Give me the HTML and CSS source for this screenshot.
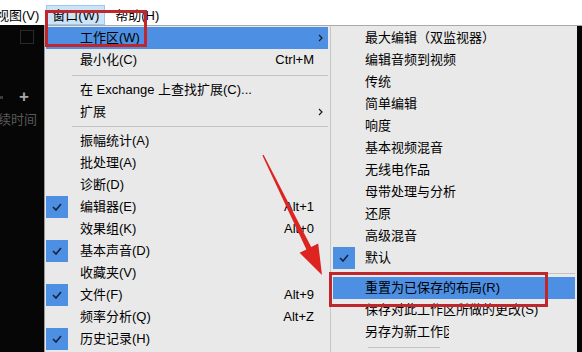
FILE: index.html
```html
<!DOCTYPE html>
<html lang="zh-CN">
<head>
<meta charset="utf-8">
<title>窗口菜单</title>
<link rel="stylesheet" href="styles.css">
</head>
<body>
<div class="screen">
  <div class="menubar">
    <span class="mb-item mb-first">视图(V)</span>
    <span class="mb-item mb-active">窗口(W)</span>
    <span class="mb-item mb-help">帮助(H)</span>
  </div>
  <div class="main">
    <div class="dark">
      <div class="sq"></div>
      <div class="plus-row"><span class="dot"></span><span class="plus">+</span></div>
      <div class="dur">持续时间</div>
    </div>

    <div class="menu">
      <div class="row hl"><span class="chk"></span><span class="lbl">工作区(W)</span><span class="sc"></span><span class="arr"><svg width="5" height="8" viewBox="0 0 5 8"><polyline points="1,1 4,4 1,7" fill="none" stroke="#1a1a1a" stroke-width="1.2"/></svg></span></div>
      <div class="row"><span class="chk"></span><span class="lbl">最小化(C)</span><span class="sc">Ctrl+M</span><span class="arr"></span></div>
      <div class="sep"></div>
      <div class="row"><span class="chk"></span><span class="lbl">在 Exchange 上查找扩展(C)...</span><span class="sc"></span><span class="arr"></span></div>
      <div class="row"><span class="chk"></span><span class="lbl">扩展</span><span class="sc"></span><span class="arr"><svg width="5" height="8" viewBox="0 0 5 8"><polyline points="1,1 4,4 1,7" fill="none" stroke="#1a1a1a" stroke-width="1.2"/></svg></span></div>
      <div class="sep sep-tight"></div>
      <div class="row"><span class="chk"></span><span class="lbl">振幅统计(A)</span><span class="sc"></span><span class="arr"></span></div>
      <div class="row"><span class="chk"></span><span class="lbl">批处理(A)</span><span class="sc"></span><span class="arr"></span></div>
      <div class="row"><span class="chk"></span><span class="lbl">诊断(D)</span><span class="sc"></span><span class="arr"></span></div>
      <div class="row"><span class="chk on"><svg width="10" height="8" viewBox="0 0 10 8"><polyline points="1,4 4,7 9,1" fill="none" stroke="#14233a" stroke-width="1.6"/></svg></span><span class="lbl">编辑器(E)</span><span class="sc">Alt+1</span><span class="arr"></span></div>
      <div class="row"><span class="chk"></span><span class="lbl">效果组(K)</span><span class="sc">Alt+0</span><span class="arr"></span></div>
      <div class="row"><span class="chk on"><svg width="10" height="8" viewBox="0 0 10 8"><polyline points="1,4 4,7 9,1" fill="none" stroke="#14233a" stroke-width="1.6"/></svg></span><span class="lbl">基本声音(D)</span><span class="sc"></span><span class="arr"></span></div>
      <div class="row"><span class="chk"></span><span class="lbl">收藏夹(V)</span><span class="sc"></span><span class="arr"></span></div>
      <div class="row"><span class="chk on"><svg width="10" height="8" viewBox="0 0 10 8"><polyline points="1,4 4,7 9,1" fill="none" stroke="#14233a" stroke-width="1.6"/></svg></span><span class="lbl">文件(F)</span><span class="sc">Alt+9</span><span class="arr"></span></div>
      <div class="row"><span class="chk"></span><span class="lbl">频率分析(Q)</span><span class="sc">Alt+Z</span><span class="arr"></span></div>
      <div class="row"><span class="chk on"><svg width="10" height="8" viewBox="0 0 10 8"><polyline points="1,4 4,7 9,1" fill="none" stroke="#14233a" stroke-width="1.6"/></svg></span><span class="lbl">历史记录(H)</span><span class="sc"></span><span class="arr"></span></div>
    </div>

    <div class="submenu">
      <div class="srow"><span class="chk"></span><span class="slbl">最大编辑（双监视器）</span></div>
      <div class="srow"><span class="chk"></span><span class="slbl">编辑音频到视频</span></div>
      <div class="srow"><span class="chk"></span><span class="slbl">传统</span></div>
      <div class="srow"><span class="chk"></span><span class="slbl">简单编辑</span></div>
      <div class="srow"><span class="chk"></span><span class="slbl">响度</span></div>
      <div class="srow"><span class="chk"></span><span class="slbl">基本视频混音</span></div>
      <div class="srow"><span class="chk"></span><span class="slbl">无线电作品</span></div>
      <div class="srow"><span class="chk"></span><span class="slbl">母带处理与分析</span></div>
      <div class="srow"><span class="chk"></span><span class="slbl">还原</span></div>
      <div class="srow"><span class="chk"></span><span class="slbl">高级混音</span></div>
      <div class="srow"><span class="chk on"><svg width="10" height="8" viewBox="0 0 10 8"><polyline points="1,4 4,7 9,1" fill="none" stroke="#14233a" stroke-width="1.6"/></svg></span><span class="slbl">默认</span></div>
      <div class="ssep"></div>
      <div class="srow hl"><span class="chk"></span><span class="slbl">重置为已保存的布局(R)</span></div>
      <div class="srow"><span class="chk"></span><span class="slbl">保存对此工作区所做的更改(S)</span></div>
      <div class="srow"><span class="chk"></span><span class="slbl">另存为新工作<span class="cut">区</span></span></div>
      <div class="ssep ssep-short"></div>
    </div>

    <div class="edge"></div>
  </div>

  <div class="redbox rb1"></div>
  <div class="redbox rb2"></div>
  <svg class="arrow" width="582" height="352" viewBox="0 0 582 352">
    <polygon points="263.6,154.8 311.2,247.0 318.2,243.4 322,275 299.6,252.8 306.4,249.4 262.4,155.4" fill="#de2420"/>
  </svg>
</div>
</body>
</html>
```

FILE: styles.css
```css
* { box-sizing: border-box; }

html, body {
  margin: 0;
  padding: 0;
  background: #ffffff;
}

body {
  font-family: "Liberation Sans", "Noto Sans CJK SC", sans-serif;
  font-size: 13px;
  color: #000;
}

.screen {
  position: relative;
  width: 582px;
  height: 352px;
  overflow: hidden;
}

/* menubar */
.menubar {
  height: 25px;
  background: #ffffff;
  display: flex;
  align-items: flex-end;
  white-space: nowrap;
}

.mb-item {
  height: 20px;
  line-height: 19px;
  padding: 0 5px;
  border: 1px solid transparent;
}

.mb-first {
  margin-left: -10px;
}

.mb-active {
  margin-left: 1px;
  background: #cce4f7;
  border-color: #99c9ef;
}

.mb-help {
  margin-left: 4px;
}

/* main area */
.main {
  display: flex;
  height: 327px;
}

.dark {
  width: 44px;
  background: #060606;
  display: flex;
  flex-direction: column;
  overflow: hidden;
}

.sq {
  margin: 5px 0 0 20px;
  width: 14px;
  height: 14px;
  border: 1px solid #2a2a2a;
}

.plus-row {
  margin-top: 46px;
  height: 14px;
  display: flex;
  align-items: center;
}

.dot {
  width: 3px;
  height: 3px;
  margin-left: 0;
  background: #3a3a3a;
}

.plus {
  margin-left: 16px;
  font-size: 17px;
  font-weight: bold;
  line-height: 14px;
  color: #a8a8a8;
}

.dur {
  margin-top: 8px;
  margin-left: -15px;
  white-space: nowrap;
  color: #5a5a5a;
  line-height: 16px;
}

/* main menu */
.menu {
  width: 286px;
  background: #e9e9e9;
  border-top: 1px solid #a9a9a9;
  border-left: 1px solid #9a9a9a;
  padding: 1px 2px 0 1px;
  white-space: nowrap;
  overflow: hidden;
}

.row {
  display: flex;
  align-items: center;
  height: 22px;
}

.hl {
  background: #4c8fe3;
}

.chk {
  width: 22px;
  height: 22px;
  flex: none;
  display: flex;
  align-items: center;
  justify-content: center;
}

.chk.on {
  background: #4c8fe3;
}

.lbl {
  margin-left: 12px;
  flex: 1;
  line-height: 22px;
}

.sc {
  line-height: 22px;
}

.arr {
  width: 14px;
  flex: none;
  display: flex;
  align-items: center;
  padding-left: 4px;
}

.sep {
  height: 1px;
  margin: 4px 0 3px 26px;
  background: #c2c2c2;
}

.sep-tight {
  margin-top: 3px;
}

/* submenu */
.submenu {
  width: 247px;
  background: #e9e9e9;
  border-top: 1px solid #a9a9a9;
  border-left: 1px solid #c6c6c6;
  padding: 1px 2px 0 2px;
  white-space: nowrap;
  overflow: hidden;
}

.srow {
  display: flex;
  align-items: center;
  height: 22px;
}

.slbl {
  margin-left: 10px;
  line-height: 22px;
}

.cut {
  display: inline-block;
  width: 6px;
  overflow: hidden;
  vertical-align: top;
}

.ssep {
  height: 1px;
  margin: 4px 0 3px 2px;
  background: #c2c2c2;
}

.ssep-short {
  margin-left: 35px;
  width: 72px;
}

.edge {
  flex: 1;
  background: #050505;
  border-top: 1px solid #a9a9a9;
}

/* annotations */
.redbox {
  position: absolute;
  border: 3px solid #c0272d;
}

.rb1 {
  left: 45px;
  top: 10px;
  width: 102px;
  height: 37px;
}

.rb2 {
  left: 329px;
  top: 272px;
  width: 219px;
  height: 35px;
}

.arrow {
  position: absolute;
  left: 0;
  top: 0;
}
```
